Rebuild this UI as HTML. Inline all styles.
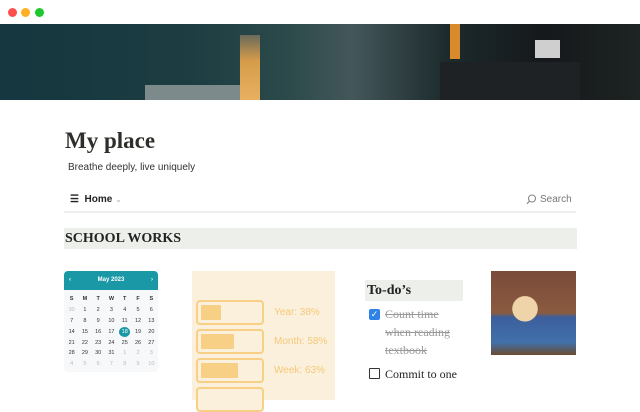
<!DOCTYPE html><html><head><style>
body{margin:0;width:640px;height:400px;overflow:hidden;background:#fff;font-family:"Liberation Sans",sans-serif;position:relative}
.a{position:absolute}
.dot{position:absolute;top:8px;width:9px;height:9px;border-radius:50%}
.cal td{width:13.4px;height:10.8px;text-align:center;font-size:5.5px;color:#333;padding:0}
.bar{position:absolute;left:196px;width:64px;height:21px;border:2px solid #f7cf85;border-radius:4px;background:#fbf0db}
.bar i{position:absolute;left:3px;top:3px;bottom:3px;background:#f7cf85;border-radius:1px}
.pt{position:absolute;left:274px;font-size:10px;color:#f5c97a}
.serif{font-family:"Liberation Serif",serif}
</style></head><body>
<div class="dot" style="left:8px;background:#fe4f4c"></div>
<div class="dot" style="left:21px;background:#fdb024"></div>
<div class="dot" style="left:35px;background:#1ec72e"></div>
<div class="a" style="left:0;top:24px;width:640px;height:76px;background:linear-gradient(90deg,#163640 0%,#1d3d42 30%,#2c4a4a 45%,#44575a 55%,#1c2a2c 70%,#16181b 85%,#1d2422 100%)"></div>
<div class="a" style="left:240px;top:35px;width:20px;height:65px;background:linear-gradient(#6a6a5a,#d69c4a 40%,#e7b060)"></div>
<div class="a" style="left:145px;top:85px;width:95px;height:15px;background:#7d8a8c"></div>
<div class="a" style="left:450px;top:24px;width:10px;height:35px;background:#d98a2a"></div>
<div class="a" style="left:440px;top:62px;width:140px;height:38px;background:#1f2225"></div>
<div class="a" style="left:535px;top:40px;width:25px;height:18px;background:#cfcfcf"></div>
<div class="a serif" style="left:65px;top:128px;font-size:23px;font-weight:bold;color:#2f2e2a">My place</div>
<div class="a" style="left:68px;top:162px;font-size:10px;color:#333">Breathe deeply, live uniquely</div>
<div class="a" style="left:70px;top:194px;font-size:10px;color:#222;font-weight:bold">☰&nbsp; Home <span style="color:#aaa;font-weight:normal;font-size:8px">⌄</span></div>
<svg class="a" style="left:526px;top:194px" width="11" height="11" viewBox="0 0 11 11"><circle cx="6" cy="4.5" r="3.5" fill="none" stroke="#888" stroke-width="1.1"/><path d="M3.5 7L1 9.8" stroke="#888" stroke-width="1.2"/></svg>
<div class="a" style="left:540px;top:194px;font-size:10px;color:#777">Search</div>
<div class="a" style="left:64px;top:211px;width:512px;height:2px;background:#eee"></div>
<div class="a serif" style="left:64px;top:228px;width:512px;height:21px;background:#edf0ea;font-size:14px;font-weight:bold;color:#222;line-height:21px;padding-left:1px">SCHOOL WORKS</div>
<div class="a" style="left:64px;top:271px;width:94px;height:101px;border-radius:4px;background:#f6f8f9;overflow:hidden">
<div style="height:19px;background:#1a98a6;color:#fff;font-size:6px;font-weight:bold;text-align:center;line-height:19px;position:relative">May 2023<span style="position:absolute;left:5px">‹</span><span style="position:absolute;right:5px">›</span></div>
<table class="cal" style="border-collapse:collapse;margin:4px 0 0 1px">
<tr><td><b>S</b></td><td><b>M</b></td><td><b>T</b></td><td><b>W</b></td><td><b>T</b></td><td><b>F</b></td><td><b>S</b></td></tr>
<tr><td style="color:#bbb">30</td><td>1</td><td>2</td><td>3</td><td>4</td><td>5</td><td>6</td></tr>
<tr><td>7</td><td>8</td><td>9</td><td>10</td><td>11</td><td>12</td><td>13</td></tr>
<tr><td>14</td><td>15</td><td>16</td><td>17</td><td><span style="display:inline-block;width:11px;height:10px;border-radius:50%;background:#1a98a6;color:#fff;line-height:10px">18</span></td><td>19</td><td>20</td></tr>
<tr><td>21</td><td>22</td><td>23</td><td>24</td><td>25</td><td>26</td><td>27</td></tr>
<tr><td>28</td><td>29</td><td>30</td><td>31</td><td style="color:#bbb">1</td><td style="color:#bbb">2</td><td style="color:#bbb">3</td></tr>
<tr><td style="color:#bbb">4</td><td style="color:#bbb">5</td><td style="color:#bbb">6</td><td style="color:#bbb">7</td><td style="color:#bbb">8</td><td style="color:#bbb">9</td><td style="color:#bbb">10</td></tr>
</table></div>
<div class="a" style="left:192px;top:271px;width:143px;height:129px;background:#fbf0db"></div>
<div class="bar" style="top:300px"><i style="width:20px"></i></div>
<div class="bar" style="top:329px"><i style="width:33px"></i></div>
<div class="bar" style="top:358px"><i style="width:37px"></i></div>
<div class="bar" style="top:387px"></div>
<div class="pt" style="top:307px">Year: 38%</div>
<div class="pt" style="top:336px">Month: 58%</div>
<div class="pt" style="top:365px">Week: 63%</div>
<div class="a serif" style="left:365px;top:280px;width:96px;height:21px;background:#edf0ea;font-size:14px;font-weight:bold;color:#222;line-height:21px;padding-left:2px">To-do’s</div>
<div class="a" style="left:369px;top:309px;width:11px;height:11px;background:#2e83e6;border-radius:2px;color:#fff;font-size:9px;line-height:11px;text-align:center">✓</div>
<div class="a serif" style="left:385px;top:305px;font-size:12px;line-height:18px;color:#999;text-decoration:line-through">Count time<br>when reading<br>textbook</div>
<div class="a" style="left:369px;top:368px;width:9px;height:9px;border:1.5px solid #333;border-radius:1px"></div>
<div class="a serif" style="left:385px;top:365px;font-size:12px;line-height:18px;color:#222">Commit to one</div>
<div class="a" style="left:491px;top:271px;width:85px;height:84px;background:radial-gradient(circle at 40% 45%,#efd4a9 0 18%,transparent 19%),linear-gradient(180deg,#7a4b3a 0%,#8a5a40 50%,#3c5f9c 55%,#4270aa 85%,#6a4a30 100%)"></div>
</body></html>
